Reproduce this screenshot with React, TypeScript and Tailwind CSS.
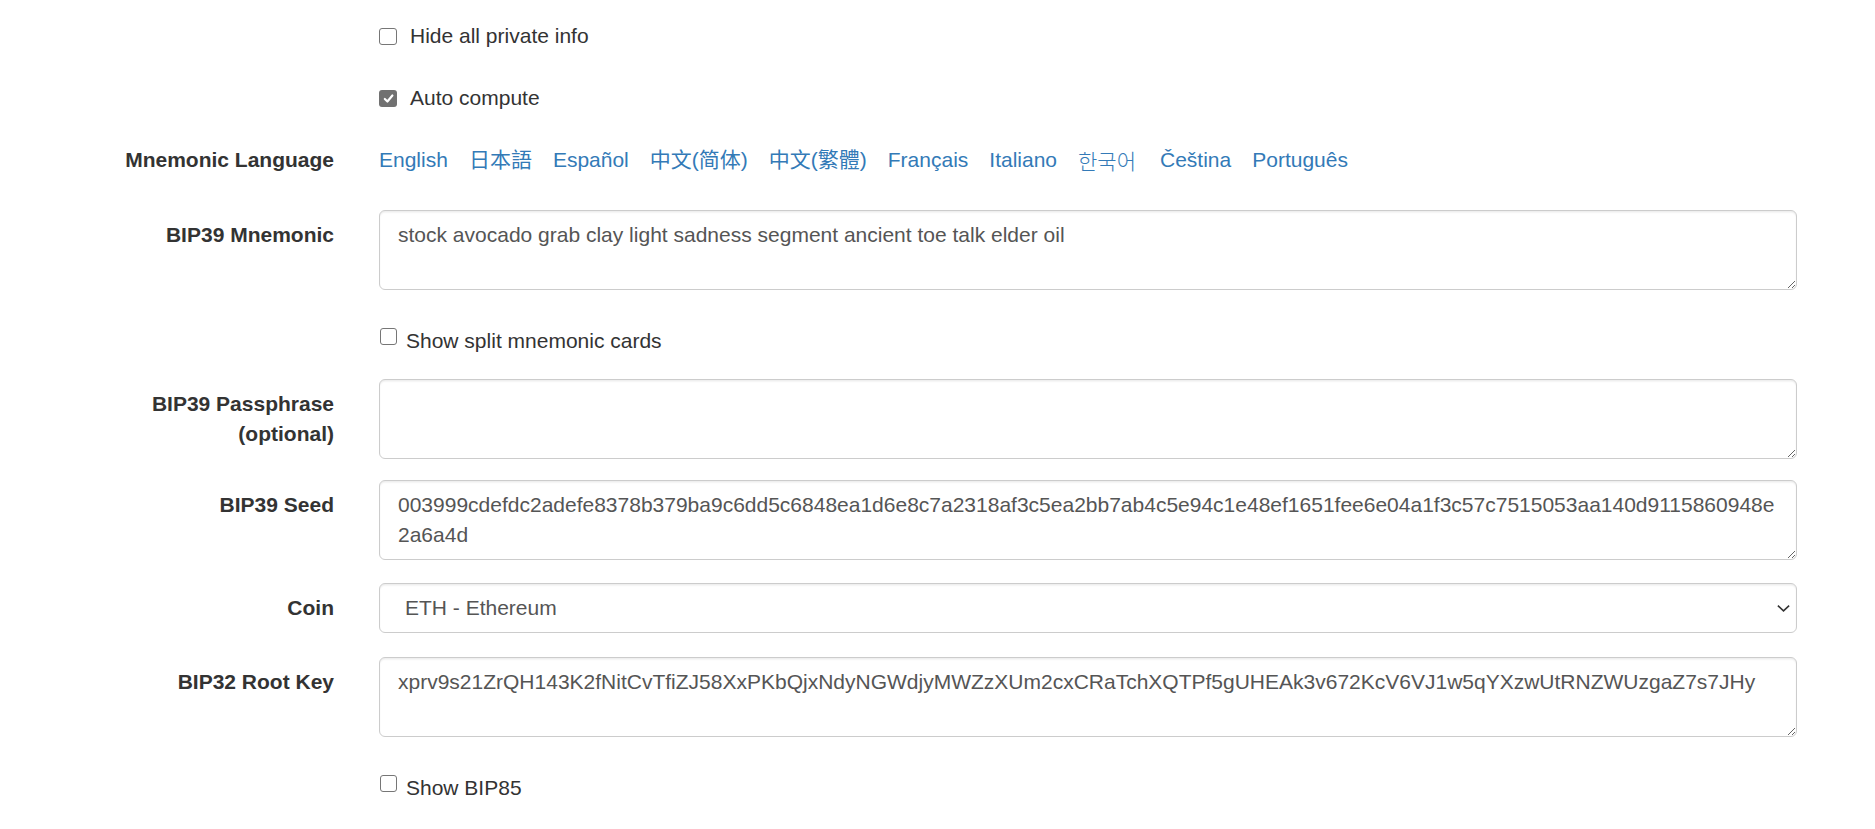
import React from "react";

const FONT = "font-['Liberation_Sans',Arial,'Noto_Sans_CJK_SC',sans-serif]";

function Box({ checked }: { checked?: boolean }) {
  return checked ? (
    <span className="inline-flex h-[17px] w-[18px] shrink-0 items-center justify-center rounded-[3px] bg-[#717171]">
      <svg viewBox="0 0 12 12" className="h-[13px] w-[13px]">
        <path d="M2.6 6.4 L5 8.8 L9.6 3.2" stroke="white" strokeWidth="2" fill="none" strokeLinecap="round" strokeLinejoin="round" />
      </svg>
    </span>
  ) : (
    <span className="inline-block h-[17px] w-[18px] shrink-0 rounded-[3px] border-[1.5px] border-[#767676] bg-white" />
  );
}

function SmallBox() {
  return <span className="inline-block h-[17px] w-[17px] shrink-0 rounded-[3px] border-[1.5px] border-[#767676] bg-white" />;
}

function Row({ label, children, className }: { label?: React.ReactNode; children: React.ReactNode; className?: string }) {
  return (
    <div className={`flex ${className ?? ""}`}>
      <div className="w-[292px] shrink-0 px-[22px] pt-[10px] text-right text-[21px] font-bold leading-[30px] text-[#333]">{label}</div>
      <div className="min-w-0 flex-1 px-[23px]">{children}</div>
    </div>
  );
}

function Area({ value }: { value: string }) {
  return (
    <textarea
      readOnly
      value={value}
      rows={2}
      className="block h-[80px] w-full resize-y overflow-hidden rounded-[6px] border border-[#ccc] bg-white pt-[9px] pb-[9px] pl-[18px] pr-[16px] text-[21px] leading-[30px] text-[#555] shadow-[inset_0_1.5px_1.5px_rgba(0,0,0,0.075)] outline-none font-['Liberation_Sans',Arial,sans-serif]"
    />
  );
}

const langs = ["English", "日本語", "Español", "中文(简体)", "中文(繁體)", "Français", "Italiano", "한국어", "Čeština", "Português"];

export default function App() {
  return (
    <div className={`min-h-[829px] w-full bg-white pl-[64px] pr-[55px] pt-[21px] ${FONT}`}>
      <Row label="" className="[&>div:first-child]:pt-0">
        <div className="flex h-[30px] items-center text-[21px] leading-[30px] text-[#333]">
          <Box />
          <span className="ml-[13px]">Hide all private info</span>
        </div>
      </Row>
      <Row label="" className="mt-[32px] [&>div:first-child]:pt-0">
        <div className="flex h-[30px] items-center text-[21px] leading-[30px] text-[#333]">
          <Box checked />
          <span className="ml-[13px]">Auto compute</span>
        </div>
      </Row>
      <Row label="Mnemonic Language" className="mt-[32px] [&>div:first-child]:pt-0">
        <div className="flex h-[30px] items-center gap-[21px] text-[21px] leading-[30px] text-[#337ab7]">
          {langs.map((l) => (
            <a key={l} href="#" className={l === "한국어" ? "pr-[3px] font-['Noto_Sans_CJK_KR',sans-serif] font-light" : ""}>
              {l}
            </a>
          ))}
        </div>
      </Row>
      <Row label="BIP39 Mnemonic" className="mt-[35px]">
        <Area value="stock avocado grab clay light sadness segment ancient toe talk elder oil" />
      </Row>
      <Row label="" className="mt-[36px] [&>div:first-child]:pt-0">
        <div className="flex h-[30px] items-center text-[21px] leading-[30px] text-[#333]">
          <span className="-mt-[6px] ml-[1px]">
            <SmallBox />
          </span>
          <span className="ml-[9px]">Show split mnemonic cards</span>
        </div>
      </Row>
      <Row label="BIP39 Passphrase (optional)" className="mt-[23px]">
        <Area value="" />
      </Row>
      <Row label="BIP39 Seed" className="mt-[21px]">
        <Area value="003999cdefdc2adefe8378b379ba9c6dd5c6848ea1d6e8c7a2318af3c5ea2bb7ab4c5e94c1e48ef1651fee6e04a1f3c57c7515053aa140d9115860948e2a6a4d" />
      </Row>
      <Row label="Coin" className="mt-[23px]">
        <div className="flex h-[50px] items-center justify-between rounded-[6px] border border-[#ccc] bg-white pl-[25px] pr-[5px] text-[21px] text-[#555] shadow-[inset_0_1.5px_1.5px_rgba(0,0,0,0.075)]">
          <span>ETH - Ethereum</span>
          <svg viewBox="0 0 16 10" className="h-[10px] w-[15px]">
            <path d="M2 2.5 L8 8 L14 2.5" stroke="#333" strokeWidth="1.7" fill="none" />
          </svg>
        </div>
      </Row>
      <Row label="BIP32 Root Key" className="mt-[24px]">
        <Area value="xprv9s21ZrQH143K2fNitCvTfiZJ58XxPKbQjxNdyNGWdjyMWZzXUm2cxCRaTchXQTPf5gUHEAk3v672KcV6VJ1w5qYXzwUtRNZWUzgaZ7s7JHy" />
      </Row>
      <Row label="" className="mt-[36px] [&>div:first-child]:pt-0">
        <div className="flex h-[30px] items-center text-[21px] leading-[30px] text-[#333]">
          <span className="-mt-[6px] ml-[1px]">
            <SmallBox />
          </span>
          <span className="ml-[9px]">Show BIP85</span>
        </div>
      </Row>
    </div>
  );
}
